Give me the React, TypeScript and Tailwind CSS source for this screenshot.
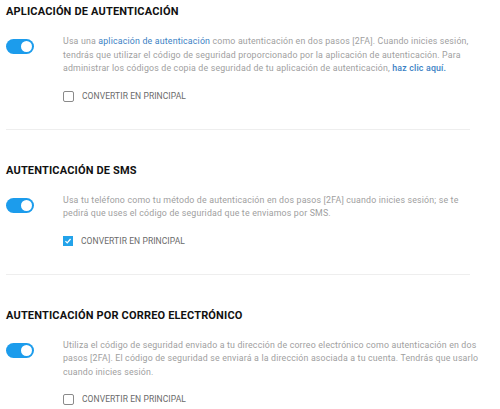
import React, { useState } from "react";

type Section = {
  title: string;
  lines: React.ReactNode[];
  primary: boolean;
};

const link = "text-[#3b7fc4]";

const sections: Section[] = [
  {
    title: "APLICACIÓN DE AUTENTICACIÓN",
    lines: [
      <>
        Usa una <span className={link}>aplicación de autenticación</span> como autenticación en dos pasos [2FA]. Cuando inicies sesión,
      </>,
      "tendrás que utilizar el código de seguridad proporcionado por la aplicación de autenticación. Para",
      <>
        administrar los códigos de copia de seguridad de tu aplicación de autenticación,{" "}
        <span className={`${link} font-medium`}>haz clic aquí.</span>
      </>,
    ],
    primary: false,
  },
  {
    title: "AUTENTICACIÓN DE SMS",
    lines: [
      "Usa tu teléfono como tu método de autenticación en dos pasos [2FA] cuando inicies sesión; se te",
      "pedirá que uses el código de seguridad que te enviamos por SMS.",
    ],
    primary: true,
  },
  {
    title: "AUTENTICACIÓN POR CORREO ELECTRÓNICO",
    lines: [
      "Utiliza el código de seguridad enviado a tu dirección de correo electrónico como autenticación en dos",
      "pasos [2FA]. El código de seguridad se enviará a la dirección asociada a tu cuenta. Tendrás que usarlo",
      "cuando inicies sesión.",
    ],
    primary: false,
  },
];

function Toggle() {
  return (
    <div className="w-[28px] h-[15px] rounded-full bg-[#1c9cec] flex items-center justify-end pr-[2px] shrink-0">
      <div className="w-[11px] h-[11px] rounded-full bg-white" />
    </div>
  );
}

function Checkbox({ checked }: { checked: boolean }) {
  if (checked) {
    return (
      <div className="w-[10px] h-[10px] bg-[#23a3ea] flex items-center justify-center">
        <svg viewBox="0 0 10 10" className="w-[8px] h-[8px]" fill="none" stroke="white" strokeWidth="1.6">
          <path d="M1.8 5.2 4 7.3 8.2 2.5" />
        </svg>
      </div>
    );
  }
  return <div className="w-[11px] h-[11px] rounded-[2px] border border-[#8a8a8a] bg-white" />;
}

function AuthSection({ s, last }: { s: Section; last: boolean }) {
  return (
    <section className={last ? "" : "border-b border-[#eeeeee] pb-[27px] mb-[34px] w-[464px]"}>
      <h2 className="text-[11px] leading-[14px] font-bold tracking-[0.015em] text-[#111] whitespace-nowrap">{s.title}</h2>
      <div className="flex mt-[16px]">
        <div className="w-[57px] pt-[4px] shrink-0">
          <Toggle />
        </div>
        <div className="flex flex-col">
          <div className="text-[8.8px] leading-[13.5px] text-[#a0a0a0] tracking-[0.02em] whitespace-nowrap">
            {s.lines.map((l, i) => (
              <div key={i}>{l}</div>
            ))}
          </div>
          <label className="flex items-center gap-[8px] mt-[15px] h-[11px]">
            <Checkbox checked={s.primary} />
            <span className="text-[8.5px] tracking-[0.01em] text-[#6a6a6a]">CONVERTIR EN PRINCIPAL</span>
          </label>
        </div>
      </div>
    </section>
  );
}

export default function App() {
  const [items] = useState(sections);
  return (
    <div className="w-[500px] h-[409px] bg-white overflow-hidden pl-[6px] pt-[5px] font-['Roboto',sans-serif]">
      {items.map((s, i) => (
        <AuthSection key={s.title} s={s} last={i === items.length - 1} />
      ))}
    </div>
  );
}
